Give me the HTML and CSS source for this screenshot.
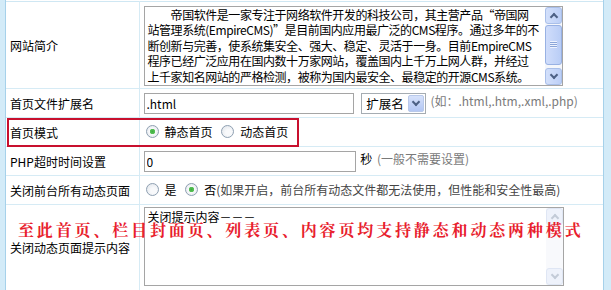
FILE: index.html
```html
<!DOCTYPE html>
<html lang="zh-CN">
<head>
  <meta charset="UTF-8">
  <title>系统参数设置</title>
  <link rel="stylesheet" href="styles.css">
</head>
<body>

<div class="frame">
  <table class="setting">
    <tr class="row-intro">
      <td class="label">网站简介</td>
      <td class="value">
        <div class="scroll-box intro-box">
          <textarea class="intro" wrap="off">　　帝国软件是一家专注于网络软件开发的科技公司，其主营产品“帝国网
站管理系统(EmpireCMS)”是目前国内应用最广泛的CMS程序。通过多年的不
断创新与完善，使系统集安全、强大、稳定、灵活于一身。目前EmpireCMS
程序已经广泛应用在国内数十万家网站，覆盖国内上千万上网人群，并经过
上千家知名网站的严格检测，被称为国内最安全、最稳定的开源CMS系统。</textarea>
          <div class="vbar">
            <span class="vbtn up"></span>
            <span class="vtrack"><span class="vthumb"></span></span>
            <span class="vbtn down"></span>
          </div>
        </div>
      </td>
    </tr>
    <tr class="row-small">
      <td class="label">首页文件扩展名</td>
      <td class="value">
        <input type="text" class="text ext" value=".html">
        <span class="select">
          <span class="select-text">扩展名</span>
          <span class="select-btn"></span>
        </span>
        <span class="hint">(如：.html,.htm,.xml,.php)</span>
      </td>
    </tr>
    <tr class="row-small">
      <td class="label">首页模式</td>
      <td class="value">
        <label class="radio"><input type="radio" name="indexmode" checked> 静态首页</label>
        <label class="radio"><input type="radio" name="indexmode"> 动态首页</label>
      </td>
    </tr>
    <tr class="row-small">
      <td class="label">PHP超时时间设置</td>
      <td class="value">
        <input type="text" class="text timeout" value="0">
        秒 <span class="hint">(一般不需要设置)</span>
      </td>
    </tr>
    <tr class="row-small">
      <td class="label">关闭前台所有动态页面</td>
      <td class="value">
        <label class="radio"><input type="radio" name="closedo"> 是</label>
        <label class="radio"><input type="radio" name="closedo" checked> 否<span class="note">(如果开启，前台所有动态文件都无法使用，但性能和安全性最高)</span></label>
      </td>
    </tr>
    <tr class="row-close">
      <td class="label">关闭动态页面提示内容</td>
      <td class="value">
        <div class="scroll-box close-box">
          <textarea class="closetext">关闭提示内容－－－</textarea>
          <div class="vbar disabled">
            <span class="vbtn up"></span>
            <span class="vtrack"></span>
            <span class="vbtn down"></span>
          </div>
        </div>
      </td>
    </tr>
  </table>

  <!-- пометки поверх скриншота -->
  <div class="mark-box"></div>
  <div class="mark-text">至此首页、栏目封面页、列表页、内容页均支持静态和动态两种模式</div>
</div>

</body>
</html>
```

FILE: styles.css
```css
* {
  box-sizing: border-box;
}

body {
  margin: 0;
  padding: 0;
  background-color: #d3ebf8;
  font-family: "Noto Sans CJK SC", "Liberation Sans", sans-serif;
  font-size: 12px;
  color: #000;
  height: 290px;
  overflow: hidden;
}

.frame {
  position: relative;
  margin-left: 5px;
  width: 599px;
  height: 290px;
  background-color: #fff;
  border-left: 1px solid #a6d1ea;
  border-right: 1px solid #a6d1ea;
  padding-top: 1px;
}

.setting {
  width: 100%;
  border-collapse: collapse;
}

.setting td {
  border: 1px solid #d6ebf5;
  padding: 0;
  vertical-align: middle;
}

.setting tr:first-child td {
  border-top-color: #cfe7f3;
}

.setting td:first-child {
  border-left: none;
}

.setting td:last-child {
  border-right: none;
}

.label {
  width: 133px;
  padding-left: 4px !important;
  white-space: nowrap;
}

.value {
  padding-left: 4px !important;
  white-space: nowrap;
}

.row-intro td {
  height: 87px;
}

.row-small td {
  height: 29px;
}

.row-close td {
  height: 90px;
  vertical-align: top;
}

.row-close .label {
  vertical-align: middle;
  padding-bottom: 4px !important;
}

/* поле с нарисованной полосой прокрутки */
.scroll-box {
  display: flex;
  border: 1px solid #a5a5a5;
  background: #fff;
}

.intro-box {
  width: 419px;
  height: 80px;
  margin-top: 1px;
}

.close-box {
  width: 420px;
  height: 79px;
  margin-top: 2px;
}

textarea {
  flex: 1;
  display: block;
  font-family: "Noto Sans CJK SC", "Liberation Sans", sans-serif;
  font-size: 12px;
  color: #000;
  border: none;
  resize: none;
  outline: none;
  overflow: hidden;
}

.intro {
  line-height: 15.6px;
  padding: 0 3px;
  letter-spacing: -0.45px;
}

.closetext {
  line-height: 16px;
  padding: 1px 3px;
}

.vbar {
  width: 17px;
  display: flex;
  flex-direction: column;
  background: #f4f6fb;
}

.vbtn {
  height: 17px;
  border: 1px solid #a9bfe9;
  border-radius: 3px;
  background: linear-gradient(to right, #d3e0fb, #bccff7);
  position: relative;
}

.vbtn::after {
  content: "";
  position: absolute;
  left: 5px;
  width: 4px;
  height: 4px;
  border-left: 2px solid #4d6185;
  border-top: 2px solid #4d6185;
}

.vbtn.up::after {
  top: 6px;
  transform: rotate(45deg);
}

.vbtn.down::after {
  top: 3px;
  transform: rotate(225deg);
}

.vtrack {
  flex: 1;
  padding: 1px 0 3px;
  display: flex;
  flex-direction: column;
}

.vthumb {
  height: 40px;
  border: 1px solid #98b1e3;
  border-radius: 3px;
  background: linear-gradient(to right, #d0ddfb, #b9cdf6);
  position: relative;
}

.vthumb::after {
  content: "";
  position: absolute;
  left: 4px;
  top: 15px;
  width: 7px;
  height: 7px;
  background: repeating-linear-gradient(#eef3fe 0 1px, #8ca6d8 1px 2px);
}

.vbar.disabled {
  background: #f8f9fc;
}

.vbar.disabled .vbtn {
  border-color: #dfe6f4;
  background: #eef2fb;
}

.vbar.disabled .vbtn::after {
  border-color: #c3cbd8;
}

.text {
  height: 21px;
  border: 1px solid #a5a5a5;
  padding: 0 2px;
  font-family: "Noto Sans CJK SC", "Liberation Sans", sans-serif;
  font-size: 12px;
  vertical-align: middle;
  outline: none;
}

.ext {
  width: 210px;
}

.timeout {
  width: 212px;
  margin-right: 2px;
}

.select {
  display: inline-flex;
  align-items: center;
  height: 21px;
  margin-left: 5px;
  border: 1px solid #a5acb2;
  vertical-align: middle;
  background: #fff;
}

.select-text {
  padding: 0 4px;
  font-size: 12.5px;
}

.select-btn {
  width: 16px;
  height: 17px;
  margin-right: 1px;
  border: 1px solid #b9c9ea;
  border-radius: 2px;
  background: linear-gradient(#d7e2fb, #b3c7f4);
  position: relative;
}

.select-btn::after {
  content: "";
  position: absolute;
  left: 4px;
  top: 3px;
  width: 4px;
  height: 4px;
  border-right: 2px solid #4d6185;
  border-bottom: 2px solid #4d6185;
  transform: rotate(45deg);
}

.hint {
  color: #7a7a7a;
  margin-left: 2px;
}

.note {
  color: #444;
}

.radio {
  display: inline-flex;
  align-items: center;
  margin-right: 4px;
}

.radio input {
  appearance: none;
  -webkit-appearance: none;
  width: 13px;
  height: 13px;
  margin: 0 6px 0 2px;
  border: 1px solid #8fa0b2;
  border-radius: 50%;
  background: radial-gradient(circle at 60% 60%, #f8f9fb 30%, #dde2e8 100%);
}

.radio input:checked {
  background: radial-gradient(circle, #3cae3c 0, #5cc15c 2.5px, #f8f9fb 3px, #dde2e8 100%);
}

.mark-box {
  position: absolute;
  left: 1px;
  top: 118px;
  width: 292px;
  height: 29px;
  border: 2px solid #c8102e;
}

.mark-text {
  position: absolute;
  left: 12px;
  top: 220px;
  font-family: "Noto Serif CJK SC", "Noto Sans CJK SC", serif;
  font-weight: bold;
  font-size: 16px;
  line-height: 20px;
  letter-spacing: 2.85px;
  color: #e8202c;
  white-space: nowrap;
}
```
